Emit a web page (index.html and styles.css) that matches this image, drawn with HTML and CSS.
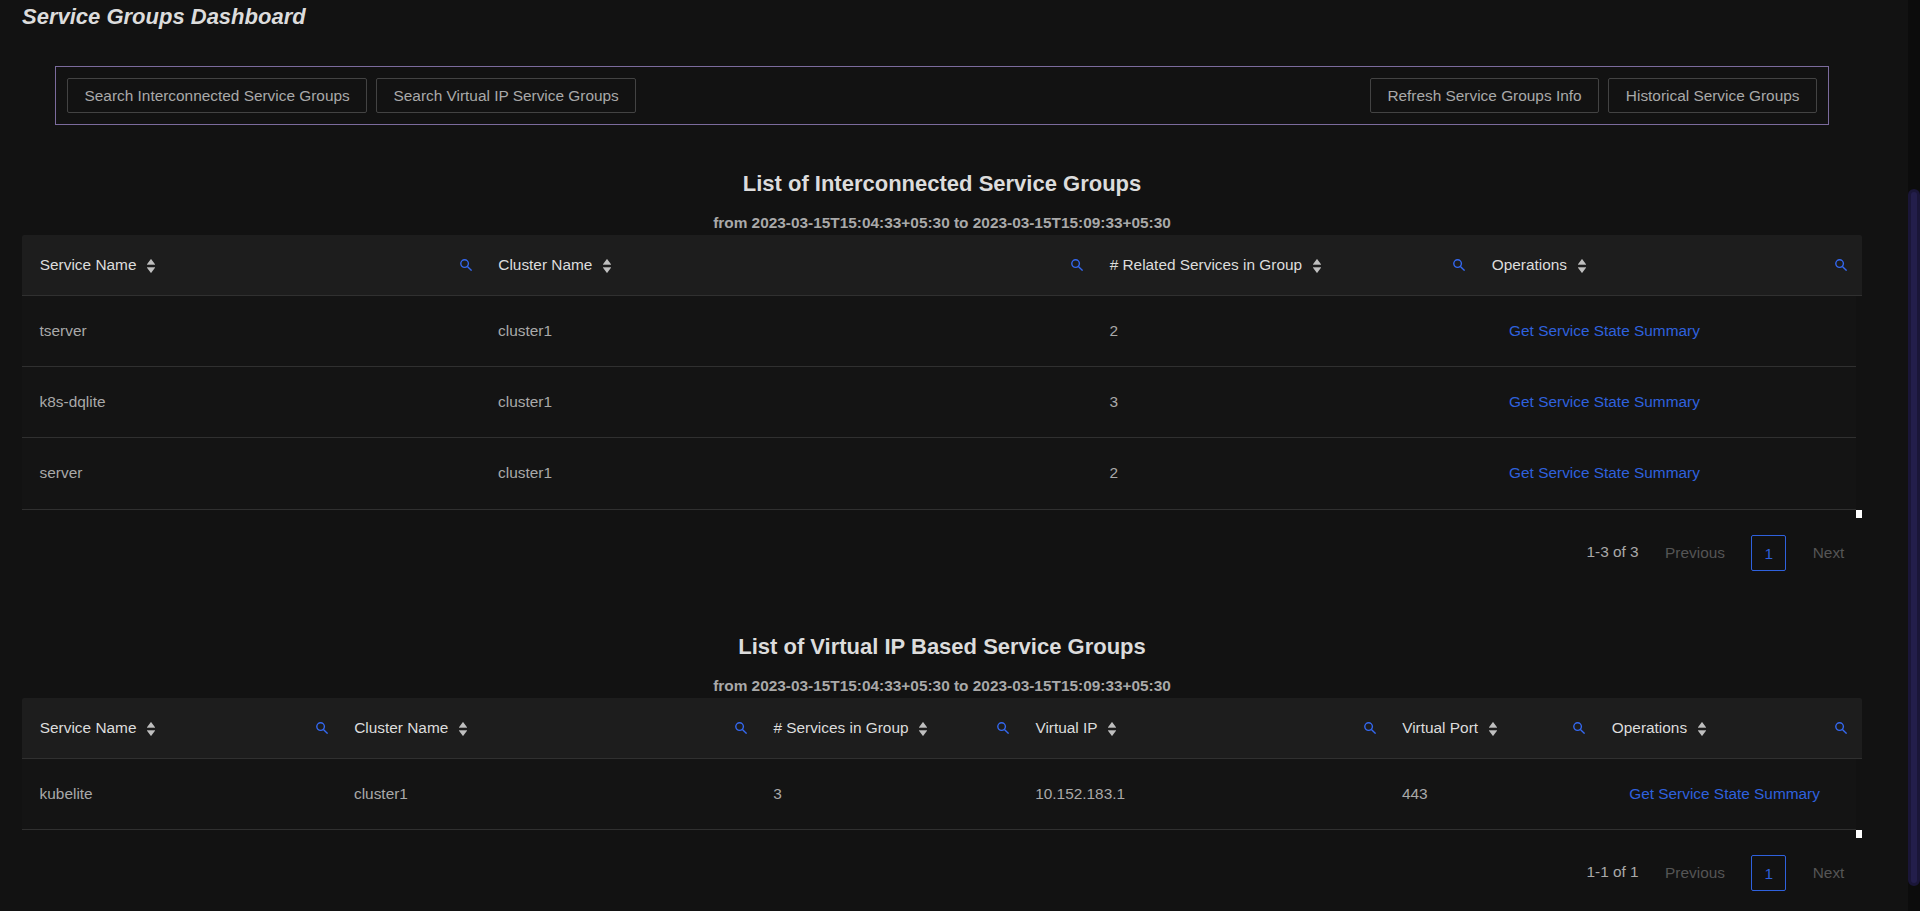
FILE: index.html
```
<!DOCTYPE html>
<html lang="en">
<head>
<meta charset="utf-8">
<title>Service Groups Dashboard</title>
<link rel="stylesheet" href="styles.css">
</head>
<body>
<svg class="defs" aria-hidden="true">
  <symbol id="sort" viewBox="0 0 8 14"><path d="M4-.1 8 5.2H0zM4 14.1 8 8.8H0z"/><path opacity=".6" d="M0 5h8v1H0zM0 8h8v1H0z"/></symbol>
  <symbol id="search" viewBox="0 0 12 12"><circle cx="4.6" cy="4.6" r="3.8"/><path d="m7.4 7.4 4.2 4.2"/></symbol>
</svg>
<div class="page">
  <main class="content">
    <h1 class="page-title">Service Groups Dashboard</h1>
    <div class="toolbar">
      <div class="group">
        <button class="btn">Search Interconnected Service Groups</button>
        <button class="btn">Search Virtual IP Service Groups</button>
      </div>
      <div class="group actions">
        <button class="btn">Refresh Service Groups Info</button>
        <button class="btn">Historical Service Groups</button>
      </div>
    </div>

    <section class="list">
      <h2 class="list-title">List of Interconnected Service Groups</h2>
      <p class="range">from 2023-03-15T15:04:33+05:30 to 2023-03-15T15:09:33+05:30</p>
      <div class="table interconnected">
        <div class="row head">
          <div class="cell">Service Name<svg class="sort"><use href="#sort"/></svg><svg class="search"><use href="#search"/></svg></div>
          <div class="cell">Cluster Name<svg class="sort"><use href="#sort"/></svg><svg class="search"><use href="#search"/></svg></div>
          <div class="cell"># Related Services in Group<svg class="sort"><use href="#sort"/></svg><svg class="search"><use href="#search"/></svg></div>
          <div class="cell">Operations<svg class="sort"><use href="#sort"/></svg><svg class="search"><use href="#search"/></svg></div>
        </div>
        <div class="body">
          <div class="row"><div class="cell">tserver</div><div class="cell">cluster1</div><div class="cell">2</div><div class="cell"><a class="link">Get Service State Summary</a></div></div>
          <div class="row"><div class="cell">k8s-dqlite</div><div class="cell">cluster1</div><div class="cell">3</div><div class="cell"><a class="link">Get Service State Summary</a></div></div>
          <div class="row"><div class="cell">server</div><div class="cell">cluster1</div><div class="cell">2</div><div class="cell"><a class="link">Get Service State Summary</a></div></div>
        </div>
        <div class="corner"></div>
      </div>
      <nav class="pagination">
        <span class="total">1-3 of 3</span><span class="step">Previous</span><span class="current">1</span><span class="step">Next</span>
      </nav>
    </section>

    <section class="list">
      <h2 class="list-title">List of Virtual IP Based Service Groups</h2>
      <p class="range">from 2023-03-15T15:04:33+05:30 to 2023-03-15T15:09:33+05:30</p>
      <div class="table virtual">
        <div class="row head">
          <div class="cell">Service Name<svg class="sort"><use href="#sort"/></svg><svg class="search"><use href="#search"/></svg></div>
          <div class="cell">Cluster Name<svg class="sort"><use href="#sort"/></svg><svg class="search"><use href="#search"/></svg></div>
          <div class="cell"># Services in Group<svg class="sort"><use href="#sort"/></svg><svg class="search"><use href="#search"/></svg></div>
          <div class="cell">Virtual IP<svg class="sort"><use href="#sort"/></svg><svg class="search"><use href="#search"/></svg></div>
          <div class="cell">Virtual Port<svg class="sort"><use href="#sort"/></svg><svg class="search"><use href="#search"/></svg></div>
          <div class="cell">Operations<svg class="sort"><use href="#sort"/></svg><svg class="search"><use href="#search"/></svg></div>
        </div>
        <div class="body">
          <div class="row"><div class="cell">kubelite</div><div class="cell">cluster1</div><div class="cell">3</div><div class="cell">10.152.183.1</div><div class="cell">443</div><div class="cell"><a class="link">Get Service State Summary</a></div></div>
        </div>
        <div class="corner"></div>
      </div>
      <nav class="pagination">
        <span class="total">1-1 of 1</span><span class="step">Previous</span><span class="current">1</span><span class="step">Next</span>
      </nav>
    </section>
  </main>
  <div class="scrollbar"><div class="thumb"></div></div>
</div>
</body>
</html>
```
FILE: styles.css
```
* { box-sizing: border-box; }
body {
  margin: 0;
  overflow: hidden;
  background: #121212;
  color: #a9a9a9;
  font: 15.4px/24.2px "Liberation Sans", Arial, sans-serif;
}
.defs { display: none; }
.page { display: flex; height: 911px; }
.content { flex: 1; padding: 4px 46px 0 22px; overflow: hidden; }
h1, h2, p { margin: 0; }
.page-title { font-size: 22px; line-height: 26px; font-style: italic; color: #dcdcdc; }
.toolbar {
  display: flex;
  justify-content: space-between;
  align-items: center;
  height: 59px;
  margin: 36px 33px 0;
  padding: 0 11px;
  border: 1px solid #7b6b9d;
}
.group { display: flex; gap: 8.8px; }
.actions { gap: 9.3px; }
.btn {
  height: 35px;
  padding: 2px 16.5px 0;
  font: inherit;
  color: #a9a9a9;
  background: transparent;
  border: 1px solid #434343;
  border-radius: 2px;
}
.list { padding-top: 46px; }
.list + .list { padding-top: 63px; }
.list-title { font-size: 22px; line-height: 26px; text-align: center; color: #dcdcdc; }
.range { margin-top: 14px; line-height: 24px; font-weight: bold; text-align: center; }
.table { display: flex; flex-direction: column; }
.row { display: grid; align-items: center; height: 71px; border-bottom: 1px solid #303030; }
.interconnected .row { grid-template-columns: 3fr 4fr 2.5fr 2.5fr; }
.virtual .row { grid-template-columns: 3fr 4fr 2.5fr 3.5fr 2fr 2.5fr; }
.head {
  height: 61px;
  padding-right: 6px;
  background: #1d1d1d;
  border-radius: 2px 2px 0 0;
  color: #dcdcdc;
}
.body { margin-right: 6px; background: #141414; }
.interconnected .body .row:last-child { height: 72px; }
.cell { display: flex; align-items: center; padding-left: 17.6px; }
.head .cell { padding-left: 17.8px; padding-right: 8.6px; }
.sort { width: 8px; height: 14px; margin: 2px 0 0 10.8px; fill: #bfbfbf; }
.search {
  width: 12px;
  height: 12px;
  margin-left: auto;
  fill: none;
  stroke: #3468f0;
  stroke-width: 1.4;
}
.link { padding-left: 17.6px; color: #2f61dd; }
.corner { width: 6px; height: 8px; align-self: flex-end; background: #fff; }
.pagination {
  display: flex;
  justify-content: flex-end;
  align-items: center;
  height: 36px;
  margin-top: 17px;
  padding-right: 17.6px;
}
.total { margin-right: 26.4px; padding-bottom: 2px; }
.step { color: #555; }
.current {
  width: 35px;
  height: 36px;
  margin: 0 26.4px;
  line-height: 35px;
  text-align: center;
  color: #2f61dd;
  border: 1px solid #2f61dd;
  border-radius: 2px;
}
.scrollbar { width: 12px; padding-top: 189px; background: #0c0c0c; }
.thumb { height: 697px; background: #231e4b; border: 3px solid #1a1638; border-radius: 6px; }
```
